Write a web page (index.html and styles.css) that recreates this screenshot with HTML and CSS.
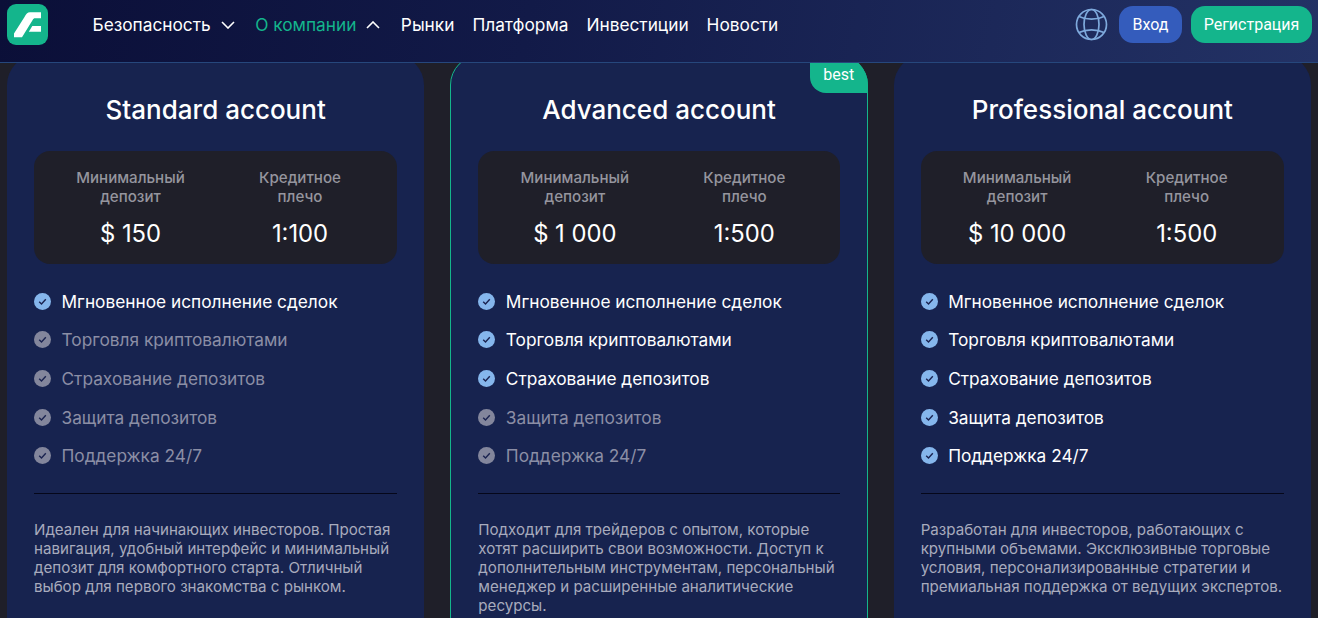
FILE: index.html
```html
<!DOCTYPE html>
<html lang="ru">
<head>
<meta charset="utf-8">
<title>Счета</title>
<link rel="stylesheet" href="styles.css">
</head>
<body>
<header class="header">
  <a class="logo" href="#"><svg width="41" height="41" viewBox="0 0 41 41"><rect width="41" height="41" rx="9" fill="#14b58c"/><path d="M23 8.300H34V14.300H28C27 14.300 26.300 14.800 25.800 15.800L15 33.300H7V29.500L17.500 13C19 10 20.500 8.300 23 8.300Z" fill="#fff"/><path d="M25.300 22H34V27.700H21.800Z" fill="#fff"/></svg></a>
  <nav class="nav">
    <a class="nav-item" href="#">Безопасность<svg class="chev" width="14" height="8" viewBox="0 0 14 8"><path d="M1 1L7 7L13 1"/></svg></a>
    <a class="nav-item active" href="#">О компании<svg class="chev" width="14" height="8" viewBox="0 0 14 8"><path d="M1 7L7 1L13 7"/></svg></a>
    <a class="nav-item" href="#">Рынки</a>
    <a class="nav-item" href="#">Платформа</a>
    <a class="nav-item" href="#">Инвестиции</a>
    <a class="nav-item" href="#">Новости</a>
  </nav>
  <div class="actions">
    <svg class="globe" width="33" height="33" viewBox="0 0 33 33"><circle cx="16.500" cy="16.500" r="15"/><ellipse cx="16.500" cy="16.500" rx="7.500" ry="15"/><path d="M4 8.500C11 12 22 12 29 8.500M4 24.500C11 21 22 21 29 24.500"/></svg>
    <a class="btn btn-login" href="#">Вход</a>
    <a class="btn btn-reg" href="#">Регистрация</a>
  </div>
</header>
<main class="cards">
  <section class="card">
    <h2 class="title">Standard account</h2>
    <div class="stats">
      <div class="stat"><div class="label">Минимальный депозит</div><div class="value">$ 150</div></div>
      <div class="stat"><div class="label">Кредитное плечо</div><div class="value">1:100</div></div>
    </div>
    <ul class="features">
      <li class="on"><svg class="tick" viewBox="0 0 17 17"><circle cx="8.500" cy="8.500" r="8.500"/><path d="M5.200 8.800L7.500 11L11.800 6.300"/></svg>Мгновенное исполнение сделок</li>
      <li><svg class="tick" viewBox="0 0 17 17"><circle cx="8.500" cy="8.500" r="8.500"/><path d="M5.200 8.800L7.500 11L11.800 6.300"/></svg>Торговля криптовалютами</li>
      <li><svg class="tick" viewBox="0 0 17 17"><circle cx="8.500" cy="8.500" r="8.500"/><path d="M5.200 8.800L7.500 11L11.800 6.300"/></svg>Страхование депозитов</li>
      <li><svg class="tick" viewBox="0 0 17 17"><circle cx="8.500" cy="8.500" r="8.500"/><path d="M5.200 8.800L7.500 11L11.800 6.300"/></svg>Защита депозитов</li>
      <li><svg class="tick" viewBox="0 0 17 17"><circle cx="8.500" cy="8.500" r="8.500"/><path d="M5.200 8.800L7.500 11L11.800 6.300"/></svg>Поддержка 24/7</li>
    </ul>
    <p class="desc">Идеален для начинающих инвесторов. Простая навигация, удобный интерфейс и минимальный депозит для комфортного старта. Отличный выбор для первого знакомства с рынком.</p>
  </section>
  <section class="card card-best">
    <span class="badge">best</span>
    <h2 class="title">Advanced account</h2>
    <div class="stats">
      <div class="stat"><div class="label">Минимальный депозит</div><div class="value">$ 1 000</div></div>
      <div class="stat"><div class="label">Кредитное плечо</div><div class="value">1:500</div></div>
    </div>
    <ul class="features">
      <li class="on"><svg class="tick" viewBox="0 0 17 17"><circle cx="8.500" cy="8.500" r="8.500"/><path d="M5.200 8.800L7.500 11L11.800 6.300"/></svg>Мгновенное исполнение сделок</li>
      <li class="on"><svg class="tick" viewBox="0 0 17 17"><circle cx="8.500" cy="8.500" r="8.500"/><path d="M5.200 8.800L7.500 11L11.800 6.300"/></svg>Торговля криптовалютами</li>
      <li class="on"><svg class="tick" viewBox="0 0 17 17"><circle cx="8.500" cy="8.500" r="8.500"/><path d="M5.200 8.800L7.500 11L11.800 6.300"/></svg>Страхование депозитов</li>
      <li><svg class="tick" viewBox="0 0 17 17"><circle cx="8.500" cy="8.500" r="8.500"/><path d="M5.200 8.800L7.500 11L11.800 6.300"/></svg>Защита депозитов</li>
      <li><svg class="tick" viewBox="0 0 17 17"><circle cx="8.500" cy="8.500" r="8.500"/><path d="M5.200 8.800L7.500 11L11.800 6.300"/></svg>Поддержка 24/7</li>
    </ul>
    <p class="desc">Подходит для трейдеров с опытом, которые хотят расширить свои возможности. Доступ к дополнительным инструментам, персональный менеджер и расширенные аналитические ресурсы.</p>
  </section>
  <section class="card">
    <h2 class="title">Professional account</h2>
    <div class="stats">
      <div class="stat"><div class="label">Минимальный депозит</div><div class="value">$ 10 000</div></div>
      <div class="stat"><div class="label">Кредитное плечо</div><div class="value">1:500</div></div>
    </div>
    <ul class="features">
      <li class="on"><svg class="tick" viewBox="0 0 17 17"><circle cx="8.500" cy="8.500" r="8.500"/><path d="M5.200 8.800L7.500 11L11.800 6.300"/></svg>Мгновенное исполнение сделок</li>
      <li class="on"><svg class="tick" viewBox="0 0 17 17"><circle cx="8.500" cy="8.500" r="8.500"/><path d="M5.200 8.800L7.500 11L11.800 6.300"/></svg>Торговля криптовалютами</li>
      <li class="on"><svg class="tick" viewBox="0 0 17 17"><circle cx="8.500" cy="8.500" r="8.500"/><path d="M5.200 8.800L7.500 11L11.800 6.300"/></svg>Страхование депозитов</li>
      <li class="on"><svg class="tick" viewBox="0 0 17 17"><circle cx="8.500" cy="8.500" r="8.500"/><path d="M5.200 8.800L7.500 11L11.800 6.300"/></svg>Защита депозитов</li>
      <li class="on"><svg class="tick" viewBox="0 0 17 17"><circle cx="8.500" cy="8.500" r="8.500"/><path d="M5.200 8.800L7.500 11L11.800 6.300"/></svg>Поддержка 24/7</li>
    </ul>
    <p class="desc">Разработан для инвесторов, работающих с крупными объемами. Эксклюзивные торговые условия, персонализированные стратегии и премиальная поддержка от ведущих экспертов.</p>
  </section>
</main>
</body>
</html>
```
FILE: styles.css
```css
* { box-sizing: border-box; }
html, body { margin: 0; height: 618px; overflow: hidden; }
body { background: #1f1f29; color: #fff; font-family: Inter, "Noto Sans", sans-serif; }
a { color: inherit; text-decoration: none; }
.header {
  position: relative; z-index: 2;
  height: 63px; display: flex; align-items: flex-start;
  padding: 4px 6px 0 7px;
  background: linear-gradient(100deg, #0b0f38 0%, #121a48 40%, #233265 100%);
  border-bottom: 1px solid #26477c;
}
.logo { display: block; width: 41px; height: 41px; }
.nav { display: flex; gap: 18px; margin-left: 44.500px; height: 41px; align-items: center; font-size: 17.280px; }
.nav-item { display: flex; align-items: center; gap: 10px; }
.nav-item.active { color: #14b58c; }
.chev { fill: none; stroke: #fff; stroke-width: 1.6; margin-right: 2.500px; }
.actions { margin-left: auto; display: flex; align-items: center; gap: 9px; height: 41px; }
.globe { fill: none; stroke: #7ea9dc; stroke-width: 1.700; margin-right: 2px; }
.btn { font-family: Roboto, sans-serif; font-size: 16px; height: 37px; border-radius: 14px; display: flex; align-items: center; justify-content: center; }
.btn-login { background: #345cbc; width: 63px; }
.btn-reg { background: #14b58c; width: 121px; }
.cards { display: grid; grid-template-columns: repeat(3, minmax(0, 1fr)); gap: 26px; padding: 0 7px; margin-top: -8px; }
.card { position: relative; background: #17234f; border-radius: 30px; padding: 37px 27px 0; height: 600px; }
.card-best { border: 1px solid #14b58c; padding: 36px 27px 0; }
.badge {
  position: absolute; top: -1px; right: -1px;
  font-family: Roboto, sans-serif; font-size: 16px;
  width: 58px; height: 38px; padding-top: 10px; text-align: center;
  background: #14b58c; border-radius: 0 30px 0 16px;
}
.title { margin: 0; font-size: 26px; font-weight: 500; line-height: 36px; text-align: center; }
.stats { margin-top: 23px; height: 113px; background: #1f1f29; border-radius: 16px; display: grid; grid-template-columns: 193px 146px; padding: 17px 0 0 0; }
.stat { text-align: center; }
.stat:first-child { padding: 0 40px; }
.stat:last-child { padding: 0 20px; }
.label { font-size: 15.120px; line-height: 19px; font-weight: 500; color: #95959e; }
.value { margin-top: 12px; font-size: 23.800px; line-height: 32px; }
.features { list-style: none; margin: 18px 0 0; padding: 0 0 18px; border-bottom: 1px solid #05071a; }
.features li { display: flex; align-items: center; gap: 10.500px; height: 38.600px; font-size: 17.280px; color: #8b8ea5; }
.features li.on { color: #fff; }
.tick { width: 17px; height: 17px; flex: none; }
.tick circle { fill: #83869c; }
.tick path { fill: none; stroke: #1a2350; stroke-width: 1.4; }
.on .tick circle { fill: #85b6ec; }
.desc { margin: 26px 0 0; font-size: 15.120px; line-height: 19px; color: #a8abbd; }
```
